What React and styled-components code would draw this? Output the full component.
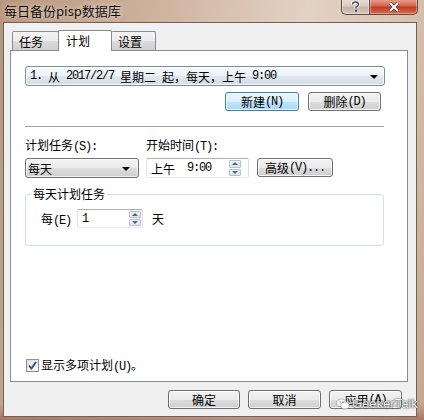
import React from "react";
import styled, { createGlobalStyle } from "styled-components";

const UI_FONT = `"Noto Sans CJK SC", "Liberation Mono", monospace`;
const CAPTION_FONT = `"Noto Sans CJK SC", "Liberation Sans", sans-serif`;

const Global = createGlobalStyle`
  html, body { margin: 0; padding: 0; }
  body {
    width: 424px;
    height: 420px;
    overflow: hidden;
    font-family: ${UI_FONT};
    font-size: 12px;
    color: #000;
  }
  * { box-sizing: border-box; }
`;

// ascii runs are drawn narrow, like the half-width latin of the old dialog font
const Ascii = styled.span`
  font-family: "Liberation Mono", monospace;
  font-size: 12px;
  letter-spacing: -1.2px;
`;

const T = ({ children }) =>
  String(children)
    .split(/([\x20-\x7e]+)/)
    .map((s, i) => (i % 2 ? <Ascii key={i}>{s}</Ascii> : s));

const Frame = styled.div`
  position: relative;
  width: 424px;
  height: 420px;
  display: flex;
  flex-direction: column;
  padding: 0 7px 3px 3px;
  background:
    linear-gradient(180deg, rgba(0,0,0,0) 96%, rgba(150,80,70,0.55) 100%),
    linear-gradient(100deg, #b8957d 0%, #cdb19b 30%, #e2d2c4 62%, #d9c3b1 82%, #c6a690 100%);
`;

const TitleBar = styled.div`
  height: 22px;
  display: flex;
  justify-content: space-between;
  align-items: flex-start;
`;

const Caption = styled.div`
  font-family: ${CAPTION_FONT};
  font-size: 13px;
  line-height: 15px;
  padding: 3px 0 0 1px;
  color: #111;
  text-shadow: 0 0 6px rgba(255, 245, 235, 0.9);
`;

const CaptionButtons = styled.div`
  display: flex;
  margin-top: -1px;
  margin-right: -1px;
`;

const CapButton = styled.div`
  height: 16px;
  width: ${p => p.$w}px;
  display: flex;
  align-items: center;
  justify-content: center;
  border: 1px solid #5d4c42;
  border-top: none;
  border-radius: ${p => (p.$close ? "0 0 5px 0" : "0 0 0 5px")};
  background: ${p =>
    p.$close
      ? "linear-gradient(180deg, #e8a493 0%, #d6654d 45%, #c23c22 55%, #d86a4f 100%)"
      : "linear-gradient(180deg, #e9ded5 0%, #d9cbc0 45%, #c6b4a6 55%, #d6c6b9 100%)"};
  box-shadow: inset 0 0 0 1px rgba(255, 255, 255, 0.35);
  & + & { border-left: none; }
`;

const Client = styled.div`
  height: 395px;
  display: flex;
  flex-direction: column;
  border: 1px solid #6b625c;
  background: #f0f0f0;
  padding: 7px 7px 0 6px;
`;

const TabRow = styled.div`
  display: flex;
  align-items: flex-start;
  height: 21px;
  padding-left: 2px;
  position: relative;
  z-index: 1;
`;

const Tab = styled.div`
  width: ${p => p.$w}px;
  height: ${p => (p.$active ? 21 : 19)}px;
  margin-top: ${p => (p.$active ? 0 : 1)}px;
  margin-left: ${p => (p.$first ? 0 : -1)}px;
  position: relative;
  z-index: ${p => (p.$active ? 2 : 1)};
  border: 1px solid #898c95;
  border-bottom: none;
  border-radius: 2px 2px 0 0;
  background: ${p =>
    p.$active
      ? "#fff"
      : "linear-gradient(180deg, #f3f3f3 0%, #ebebeb 50%, #dddddd 51%, #cfcfcf 100%)"};
  padding: ${p => (p.$active ? "2px 0 0 7px" : "2px 0 0 6px")};
  line-height: 15px;
`;

const Panel = styled.div`
  margin-top: -1px;
  margin-right: 1px;
  height: 332px;
  display: flex;
  flex-direction: column;
  border: 1px solid #898c95;
  background: #fff;
  padding: 15px 22px 9px 14px;
`;

const Combo = styled.div`
  position: relative;
  height: ${p => p.$h || 20}px;
  display: flex;
  align-items: center;
  padding-left: ${p => p.$pad || 4}px;
  border: 1px solid ${p => (p.$hot ? "#7a8fa3" : "#707070")};
  border-radius: 3px;
  background: ${p =>
    p.$hot
      ? "linear-gradient(180deg, #f6f9fb 0%, #edf2f6 50%, #dfe7ee 51%, #d5dee6 100%)"
      : "linear-gradient(180deg, #f2f2f2 0%, #ebebeb 50%, #dddddd 51%, #cfcfcf 100%)"};
  box-shadow: inset 0 0 0 1px rgba(255, 255, 255, 0.7);
  white-space: pre;
  overflow: hidden;
`;

const Arrow = styled.span`
  position: absolute;
  right: ${p => p.$right || 6}px;
  top: 8px;
  width: 0;
  height: 0;
  border-left: 4px solid transparent;
  border-right: 4px solid transparent;
  border-top: 4px solid #000;
`;

const ButtonRow = styled.div`
  display: flex;
  justify-content: flex-end;
  gap: 9px;
  margin-top: 6px;
  padding-right: 4px;
`;

const Button = styled.div`
  width: ${p => p.$w}px;
  height: 19px;
  display: flex;
  align-items: center;
  justify-content: ${p => (p.$left ? "flex-start" : "center")};
  padding-left: ${p => (p.$left ? 7 : 0)}px;
  border: 1px solid ${p => (p.$default ? "#3c7fb1" : "#707070")};
  border-radius: 3px;
  background: ${p =>
    p.$default
      ? "linear-gradient(180deg, #eaf6fd 0%, #d9f0fc 50%, #bee6fd 51%, #a7d9f5 100%)"
      : "linear-gradient(180deg, #f2f2f2 0%, #ebebeb 50%, #dddddd 51%, #cfcfcf 100%)"};
  box-shadow: inset 0 0 0 1px rgba(255, 255, 255, 0.75);
  white-space: pre;
`;

const Separator = styled.div`
  height: 1px;
  margin-top: 15px;
  margin-right: 1px;
  background: #a0a0a0;
`;

const FieldGrid = styled.div`
  display: grid;
  grid-template-columns: 114px 103px 76px;
  column-gap: 7px;
  row-gap: 3px;
  margin-top: 10px;
  & > :nth-child(3n) { margin-left: 1px; }
`;

const Label = styled.div`
  line-height: 16px;
  white-space: pre;
`;

const Field = styled.div`
  position: relative;
  width: ${p => (p.$w ? `${p.$w}px` : "auto")};
  height: ${p => p.$h || 20}px;
  display: flex;
  align-items: center;
  padding-left: 4px;
  border: 1px solid #abadb3;
  border-left-color: #e2e3ea;
  border-right-color: #dbdfe6;
  border-bottom-color: #e3e9ef;
  border-radius: 2px;
  background: #fff;
  white-space: pre;
`;

const Spinner = styled.div`
  position: absolute;
  right: ${p => p.$right || 6}px;
  top: 1px;
  bottom: 1px;
  width: 12px;
  display: flex;
  flex-direction: column;
  gap: 1px;
`;

const SpinHalf = styled.div`
  flex: 1;
  display: flex;
  align-items: center;
  justify-content: center;
  border: 1px solid #b6c1cc;
  border-radius: 1px;
  background: linear-gradient(180deg, #f3f6f9 0%, #dde5ec 100%);
  &::after {
    content: "";
    width: 0;
    height: 0;
    border-left: 3px solid transparent;
    border-right: 3px solid transparent;
    ${p =>
      p.$up
        ? "border-bottom: 3px solid #4d6185;"
        : "border-top: 3px solid #4d6185;"}
  }
`;

const Group = styled.fieldset`
  margin: 9px 1px 0 0;
  padding: 0 0 17px 15px;
  border: 1px solid #d5dfe5;
  border-radius: 3px;
  min-width: 0;
`;

const Legend = styled.legend`
  margin-left: -10px;
  padding: 0 2px;
  line-height: 14px;
`;

const GroupRow = styled.div`
  display: flex;
  align-items: center;
  margin-top: 8px;
`;

const RowLabel = styled.span`
  width: 36px;
  white-space: pre;
`;

const Unit = styled.span`
  margin-left: 9px;
`;

const CheckRow = styled.div`
  margin-top: auto;
  display: flex;
  align-items: center;
  gap: 2px;
  margin-left: 1px;
  height: 14px;
`;

const CheckBox = styled.span`
  width: 13px;
  height: 13px;
  border: 1px solid #8e8f8f;
  background: linear-gradient(135deg, #dcdcdc 0%, #f4f4f4 60%, #ffffff 100%);
  display: flex;
  align-items: center;
  justify-content: center;
`;

const Footer = styled.div`
  display: flex;
  justify-content: flex-end;
  gap: 8px;
  padding: 8px 7px 0 0;
`;

const Watermark = styled.div`
  position: absolute;
  left: 336px;
  top: 396px;
  display: flex;
  align-items: center;
  gap: 2px;
  font-family: "Liberation Sans", sans-serif;
  font-size: 13px;
  color: rgba(255, 255, 255, 0.95);
  text-shadow: 0 0 1px #333, 0 0 2px #555;
  pointer-events: none;
`;

const tabs = [
  { label: "任务", w: 47 },
  { label: "计划", w: 54, active: true },
  { label: "设置", w: 45 },
];

export default function App() {
  return (
    <Frame>
      <Global />
      <TitleBar>
        <Caption>每日备份pisp数据库</Caption>
        <CaptionButtons>
          <CapButton $w={29}>
            <svg width="9" height="11" viewBox="0 0 9 11">
              <path d="M1.5 3.5 Q1.5 1 4.5 1 Q7.5 1 7.5 3.5 Q7.5 5 5 6 L5 7.5" fill="none" stroke="#fff" strokeWidth="3" />
              <path d="M1.5 3.5 Q1.5 1 4.5 1 Q7.5 1 7.5 3.5 Q7.5 5 5 6 L5 7.5" fill="none" stroke="#4a4a55" strokeWidth="1.4" />
              <rect x="4" y="8.8" width="2" height="2" fill="#4a4a55" />
            </svg>
          </CapButton>
          <CapButton $w={48} $close>
            <svg width="12" height="10" viewBox="0 0 12 10">
              <path d="M2 1 L10 9 M10 1 L2 9" stroke="#4a3a40" strokeWidth="3.4" />
              <path d="M2 1 L10 9 M10 1 L2 9" stroke="#fff" strokeWidth="2" />
            </svg>
          </CapButton>
        </CaptionButtons>
      </TitleBar>

      <Client>
        <TabRow>
          {tabs.map((t, i) => (
            <Tab key={t.label} $w={t.w} $active={t.active} $first={i === 0}>
              {t.label}
            </Tab>
          ))}
        </TabRow>

        <Panel>
          <Combo $hot>
            <T>1. 从 2017/2/7 星期二 起，每天，上午 9:00</T>
            <Arrow $right={6} />
          </Combo>

          <ButtonRow>
            <Button $w={74} $default><T>新建(N)</T></Button>
            <Button $w={73}><T>删除(D)</T></Button>
          </ButtonRow>

          <Separator />

          <FieldGrid>
            <Label><T>计划任务(S):</T></Label>
            <Label><T>开始时间(T):</T></Label>
            <span />
            <Combo $pad={2}>
              每天
              <Arrow $right={8} />
            </Combo>
            <Field>
              <T>{"上午  9:00"}</T>
              <Spinner $right={7}>
                <SpinHalf $up />
                <SpinHalf />
              </Spinner>
            </Field>
            <Button $w={76} $left><T>高级(V)...</T></Button>
          </FieldGrid>

          <Group>
            <Legend>每天计划任务</Legend>
            <GroupRow>
              <RowLabel><T>每(E)</T></RowLabel>
              <Field $w={66} $h={19}>
                <T>1</T>
                <Spinner $right={1}>
                  <SpinHalf $up />
                  <SpinHalf />
                </Spinner>
              </Field>
              <Unit>天</Unit>
            </GroupRow>
          </Group>

          <CheckRow>
            <CheckBox>
              <svg width="9" height="9" viewBox="0 0 9 9">
                <path d="M1 4.5 L3.5 7.5 L8 1" fill="none" stroke="#2b4b8c" strokeWidth="1.8" />
              </svg>
            </CheckBox>
            <span><T>显示多项计划(U)。</T></span>
          </CheckRow>
        </Panel>

        <Footer>
          <Button $w={72}>确定</Button>
          <Button $w={73}>取消</Button>
          <Button $w={73}><T>应用(A)</T></Button>
        </Footer>
      </Client>

      <Watermark>
        <svg width="14" height="12" viewBox="0 0 14 12">
          <ellipse cx="5.5" cy="5" rx="5" ry="4" fill="#fff" stroke="#888" strokeWidth="0.6" />
          <ellipse cx="9" cy="7.5" rx="4.3" ry="3.4" fill="#fff" stroke="#888" strokeWidth="0.6" />
          <circle cx="4" cy="4" r="0.7" fill="#777" />
          <circle cx="7" cy="4" r="0.7" fill="#777" />
        </svg>
        GeekerTalk
      </Watermark>
    </Frame>
  );
}
